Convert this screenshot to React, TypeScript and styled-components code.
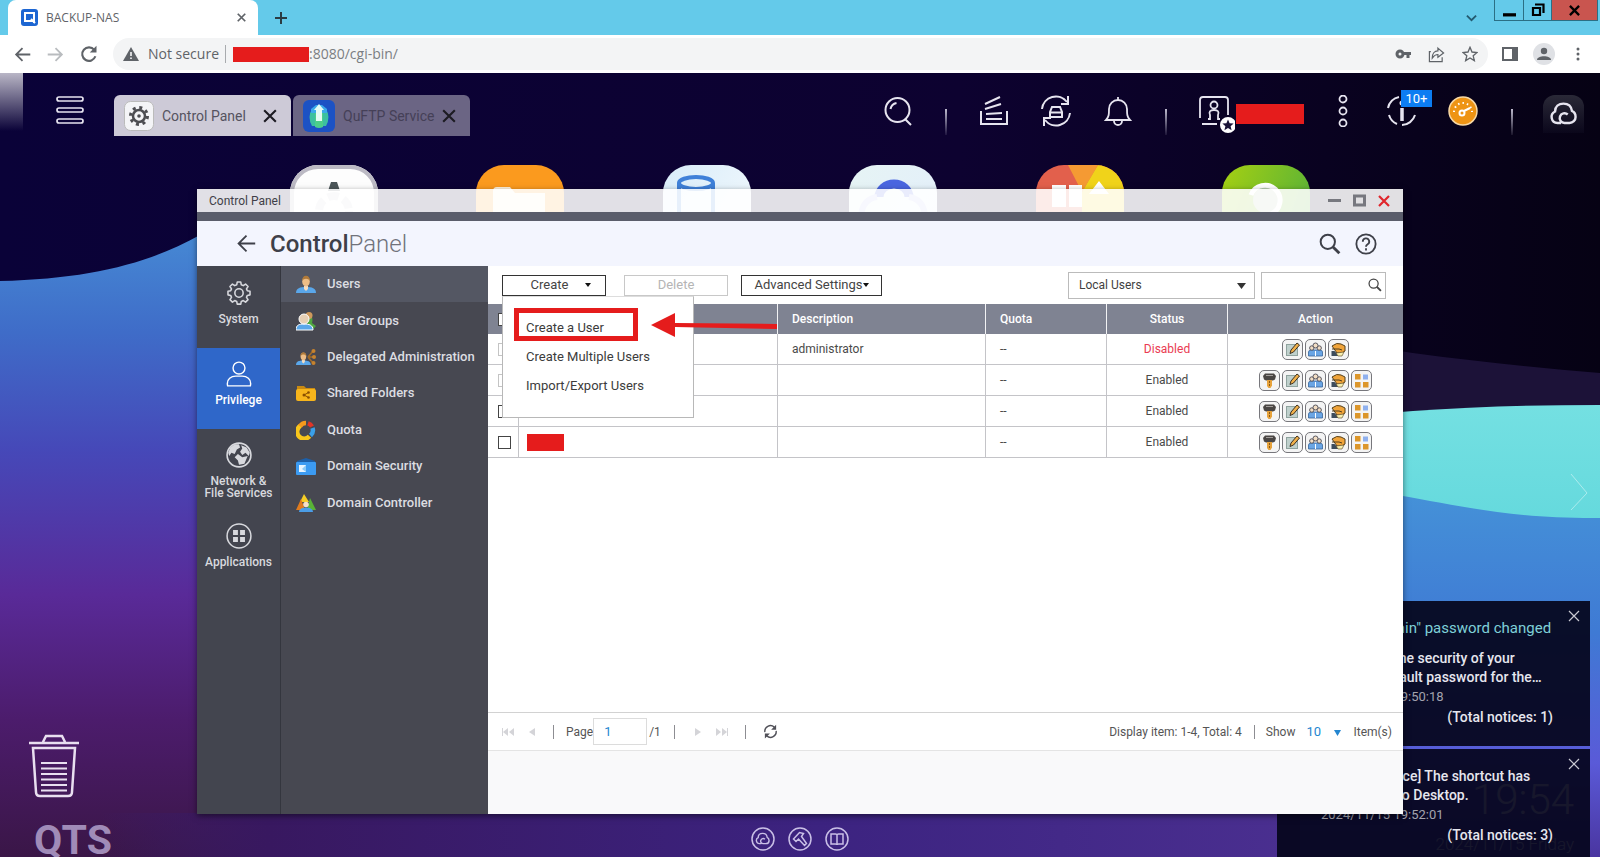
import React from "react";
import styled, { createGlobalStyle, css } from "styled-components";

const RED = "#e51c1c";

const GlobalStyle = createGlobalStyle`
  *, *::before, *::after { box-sizing: border-box; }
  body { margin: 0; overflow: hidden; font-family: Roboto, "Liberation Sans", sans-serif; }
  button, input, select { font-family: inherit; }
  button { background: none; border: 0; padding: 0; color: inherit; cursor: pointer; }
  ul { list-style: none; margin: 0; padding: 0; }
  svg { display: block; flex: none; }
`;

const Screen = styled.div`
  height: 100vh;
  display: flex;
  flex-direction: column;
  overflow: hidden;
`;

/* ---------- browser chrome ---------- */

const BrowserFrame = styled.header`
  font-family: "Open Sans", "Noto Sans", sans-serif;
  background: #64caea;
  color: #5f6368;
`;

const TabStrip = styled.div`
  height: 35px;
  display: flex;
  padding-left: 8px;
`;

const BrowserTab = styled.div`
  width: 250px;
  background: #fff;
  border-radius: 8px 8px 0 0;
  display: flex;
  align-items: center;
  gap: 8px;
  padding: 0 12px 0 13px;
  font-size: 12px;
  line-height: 16px;
`;

const TabTitle = styled.span`
  flex: 1;
`;

const NewTab = styled.button`
  width: 46px;
  display: grid;
  place-items: center;
`;

const StripSpace = styled.div`
  flex: 1;
`;

const TabSearch = styled.button`
  width: 46px;
  display: grid;
  place-items: center;
`;

const FrameButtons = styled.div`
  display: flex;
  height: 21px;
  margin-right: 2px;
  border: 1px solid #2b6f85;
  border-top: 0;
`;

const FrameButton = styled.button<{ $close?: boolean }>`
  width: ${(p) => (p.$close ? 46 : 28)}px;
  display: grid;
  place-items: center;
  color: #000;
  background: ${(p) => (p.$close ? "#c9554f" : "transparent")};
  & + & { border-left: 1px solid #2b6f85; }
`;

const NavBar = styled.div`
  height: 38px;
  background: #fff;
  display: flex;
  align-items: center;
  padding: 0 14px;
`;

const NavButton = styled.button<{ $faded?: boolean }>`
  width: 33px;
  height: 32px;
  display: flex;
  align-items: center;
  color: ${(p) => (p.$faded ? "#b9bcbf" : "#5f6368")};
`;

const AddressBar = styled.div`
  flex: 1;
  height: 32px;
  border-radius: 16px;
  background: #f3f4f5;
  display: flex;
  align-items: center;
  padding: 0 10px;
  font-size: 14px;
  line-height: 20px;
`;

const NotSecure = styled.span`
  display: flex;
  align-items: center;
  gap: 9px;
  padding-right: 6px;
  border-right: 1px solid #a8abae;
  height: 18px;
`;

const Redaction = styled.span<{ $w: number; $h: number }>`
  display: block;
  flex: none;
  width: ${(p) => p.$w}px;
  height: ${(p) => p.$h}px;
  background: ${RED};
`;

const AddressText = styled.span`
  flex: 1;
  color: #7b7e82;
`;

const AddressHost = styled.span`
  padding-left: 7px;
`;

const AddressTools = styled.div`
  display: flex;
  align-items: center;
  gap: 17px;
`;

const BrowserTools = styled.div`
  display: flex;
  align-items: center;
  gap: 15px;
  padding-left: 14px;
`;

const ProfileBadge = styled.button`
  width: 22px;
  height: 22px;
  border-radius: 50%;
  background: #dfe1e5;
  display: grid;
  place-items: center;
`;

/* ---------- desktop ---------- */

const Desktop = styled.main`
  position: relative;
  flex: 1;
  min-height: 0;
  overflow: hidden;
  background: #0a0231;
`;

const Wallpaper = styled.svg`
  position: absolute;
  inset: 0;
  width: 100%;
  height: 100%;
`;

const EdgeGlow = styled.div`
  position: absolute;
  left: 0;
  top: 0;
  width: 23px;
  height: 58px;
  background: linear-gradient(#b9b6c6, rgba(10, 2, 49, 0));
`;

const TopBar = styled.div`
  position: relative;
  height: 92px;
  display: flex;
  align-items: flex-start;
  padding: 22px 3px 0 56px;
  color: #e6e4ef;
`;

const MenuButton = styled.button`
  width: 58px;
  height: 30px;
`;

const AppTabs = styled.div`
  display: flex;
  gap: 2px;
  flex: 1;
`;

const AppTab = styled.div<{ $active?: boolean }>`
  width: 177px;
  height: 41px;
  border-radius: 6px 6px 0 0;
  background: ${(p) => (p.$active ? "#cdcad7" : "#6b6584")};
  color: ${(p) => (p.$active ? "#55535f" : "#454057")};
  display: flex;
  align-items: center;
  gap: 8px;
  padding: 0 14px 0 10px;
  font-size: 14px;
  line-height: 20px;
  & > span { flex: 1; white-space: nowrap; }
`;

const AppTabClose = styled.button`
  color: #1c1b22;
`;

const Tool = styled.button<{ $w?: number }>`
  position: relative;
  width: ${(p) => p.$w ?? 62}px;
  height: 32px;
  display: grid;
  place-items: center;
`;

const ToolSep = styled.span`
  width: 34px;
  height: 40px;
  display: flex;
  align-items: flex-end;
  justify-content: center;
  &::after {
    content: "";
    width: 2px;
    height: 26px;
    background: linear-gradient(#bdbacd, rgba(189, 186, 205, 0.1));
  }
`;

const UserTool = styled.button`
  width: 130px;
  height: 38px;
  display: flex;
  align-items: center;
  gap: 1px;
  padding-left: 15px;
`;

const CountBadge = styled.span`
  position: absolute;
  top: -5px;
  left: 28px;
  width: 31px;
  height: 17px;
  background: #0c7df2;
  color: #fff;
  font-size: 13px;
  line-height: 17px;
`;

const CloudBox = styled.span`
  width: 41px;
  height: 38px;
  border-radius: 12px 12px 0 0;
  background: linear-gradient(#2a2937, rgba(20, 18, 40, 0.3));
  display: grid;
  place-items: center;
`;

const ShortcutRow = styled.div`
  position: relative;
  display: flex;
  justify-content: space-between;
  padding: 0 290px;
`;

const Shortcut = styled.button<{ $bg: string; $ring?: string }>`
  width: 88px;
  height: 88px;
  border-radius: 28px;
  background: ${(p) => p.$bg};
  overflow: hidden;
  ${(p) => p.$ring && css`box-shadow: inset 0 0 0 4px ${p.$ring};`}
`;

const Trash = styled.button`
  position: absolute;
  left: 28px;
  bottom: 58px;
`;

const Brand = styled.div`
  position: absolute;
  left: 34px;
  bottom: -7px;
  font-size: 41px;
  line-height: 48px;
  font-weight: 700;
  color: #a08bb8;
`;

const Dock = styled.div`
  position: absolute;
  left: 0;
  right: 0;
  bottom: 6px;
  display: flex;
  justify-content: center;
  gap: 13px;
  color: #c9bfe6;
`;

const PageNext = styled.button`
  position: absolute;
  right: 11px;
  top: 400px;
  color: rgba(255, 255, 255, 0.45);
`;

const Clock = styled.div`
  position: absolute;
  right: 26px;
  bottom: 2px;
  text-align: right;
  color: #fff;
  font-weight: 300;
  font-size: 17px;
  line-height: 22px;
`;

const ClockTime = styled.div`
  font-size: 42px;
  line-height: 66px;
`;

const Notices = styled.div`
  position: absolute;
  right: 10px;
  bottom: -37px;
  width: 313px;
  display: flex;
  flex-direction: column;
  gap: 3px;
`;

const Notice = styled.article`
  position: relative;
  height: 145px;
  background: rgba(5, 5, 28, 0.93);
  color: #e6e6ee;
  padding: 18px 37px 0 44px;
  font-size: 14px;
  line-height: 19px;
  font-weight: 500;
  white-space: nowrap;
`;

const NoticeTitle = styled.h3`
  margin: 0 0 11px;
  font-size: 15px;
  line-height: 19px;
  font-weight: 400;
  color: #7fd0d8;
`;

const NoticeTime = styled.div`
  color: #a3a3ae;
  font-size: 13px;
  font-weight: 400;
  line-height: 20px;
`;

const NoticeTotal = styled.div`
  text-align: right;
  line-height: 21px;
`;

const NoticeClose = styled.button`
  position: absolute;
  right: 10px;
  top: 9px;
  color: #c9c9d2;
`;

/* ---------- control panel window ---------- */

const Win = styled.section`
  position: absolute;
  left: 197px;
  right: 197px;
  top: 116px;
  bottom: 43px;
  display: flex;
  flex-direction: column;
  box-shadow: 0 2px 6px rgba(0, 0, 0, 0.5);
`;

const WinTitle = styled.div`
  height: 23px;
  background: rgba(255, 255, 255, 0.88);
  display: flex;
  align-items: center;
  padding: 0 13px 0 12px;
  font-size: 12px;
  line-height: 16px;
  color: #3f3f48;
  & > span { flex: 1; }
`;

const WinButtons = styled.div`
  display: flex;
  gap: 12px;
`;

const WinStrip = styled.div`
  height: 9px;
  background: #5a5d6b;
`;

const WinHeader = styled.div`
  height: 45px;
  background: #f3f5fe;
  display: flex;
  align-items: center;
  padding: 0 26px 0 40px;
  color: #3e4049;
`;

const WinHeading = styled.h1`
  flex: 1;
  margin: 0 0 0 14px;
  font-size: 24px;
  line-height: 32px;
  font-weight: 500;
  & > span { font-weight: 300; color: #70727b; }
`;

const HeaderTools = styled.div`
  display: flex;
  gap: 14px;
`;

const WinBody = styled.div`
  flex: 1;
  min-height: 0;
  display: flex;
  background: #fff;
`;

const Sections = styled.nav`
  width: 84px;
  padding-top: 1px;
  background: #43454f;
  border-right: 1px solid #34363e;
`;

const Section = styled.a<{ $active?: boolean }>`
  height: 81px;
  padding-top: 13px;
  display: flex;
  flex-direction: column;
  align-items: center;
  gap: 7px;
  text-decoration: none;
  text-align: center;
  font-size: 12px;
  line-height: 12px;
  font-weight: 500;
  color: ${(p) => (p.$active ? "#fff" : "#d8d9de")};
  background: ${(p) => (p.$active ? "#2f67c9" : "transparent")};
`;

const Pages = styled.nav`
  width: 207px;
  background: #474851;
`;

const PageList = styled.ul`
  height: 255px;
  display: grid;
  grid-auto-rows: 1fr;
`;

const PageLink = styled.a<{ $active?: boolean }>`
  height: 100%;
  display: flex;
  align-items: center;
  gap: 11px;
  padding-left: 15px;
  font-size: 13px;
  line-height: 18px;
  font-weight: 500;
  text-decoration: none;
  color: #dcdde1;
  background: ${(p) => (p.$active ? "#545763" : "transparent")};
`;

const Content = styled.div`
  flex: 1;
  min-width: 0;
  display: flex;
  flex-direction: column;
`;

const Actions = styled.div`
  height: 38px;
  display: flex;
  align-items: center;
  padding: 0 17px 0 14px;
`;

const MenuAnchor = styled.div`
  position: relative;
`;

const ActionButton = styled.button<{ $w: number }>`
  width: ${(p) => p.$w}px;
  height: 21px;
  border: 1px solid #333;
  background: #fff;
  display: flex;
  align-items: center;
  justify-content: center;
  font-size: 13px;
  line-height: 18px;
  color: #444;
  white-space: nowrap;
  &:disabled { border-color: #c8c8c8; color: #b5b5b5; }
`;

const CreateButton = styled(ActionButton)`
  gap: 17px;
  padding-left: 14px;
`;

const DeleteButton = styled(ActionButton)`
  margin: 0 13px 0 18px;
`;

const Spacer = styled.div`
  flex: 1;
`;

const CreateMenu = styled.ul`
  position: absolute;
  z-index: 2;
  left: 0;
  top: 21px;
  width: 192px;
  height: 122px;
  padding-top: 17px;
  background: #fff;
  border: 1px solid #b8b8b8;
  border-top-color: #ddd;
`;

const CreateMenuItem = styled.button`
  width: 100%;
  height: 29px;
  padding-left: 23px;
  text-align: left;
  font-size: 13px;
  line-height: 18px;
  color: #3c3c3c;
`;

const Callout = styled.svg`
  position: absolute;
  z-index: 3;
  left: 12px;
  top: 33px;
`;

const ScopeBox = styled.div`
  position: relative;
  width: 187px;
  height: 27px;
  margin-right: 6px;
  & > svg { position: absolute; right: 9px; top: 11px; pointer-events: none; }
`;

const ScopeSelect = styled.select`
  appearance: none;
  width: 100%;
  height: 100%;
  border: 1px solid #bbb;
  border-radius: 0;
  background: #fff;
  padding: 0 10px;
  font-size: 12px;
  color: #3f3f3f;
`;

const SearchBox = styled.div`
  position: relative;
  width: 125px;
  height: 27px;
  color: #444;
  & > svg { position: absolute; right: 4px; top: 6px; }
`;

const SearchInput = styled.input`
  width: 100%;
  height: 100%;
  border: 1px solid #bbb;
  padding: 0 24px 0 8px;
  font-size: 12px;
`;

const UserTable = styled.table`
  width: 100%;
  table-layout: fixed;
  border-collapse: separate;
  border-spacing: 0;
  font-size: 12px;
  line-height: 16px;
  color: #4a4a4a;
`;

const Col = styled.col<{ $w?: number }>`
  ${(p) => p.$w && css`width: ${p.$w}px;`}
`;

const Th = styled.th<{ $center?: boolean }>`
  height: 30px;
  padding: 0 14px;
  background: #7f8392;
  color: #fff;
  font-weight: 500;
  text-align: ${(p) => (p.$center ? "center" : "left")};
  border-right: 1px solid #f2f2f4;
  &:first-child { border-right-color: #7f8392; padding: 0 0 0 10px; }
  &:last-child { border-right: 0; }
`;

const Td = styled.td<{ $center?: boolean; $off?: boolean }>`
  height: 31px;
  padding: 0 14px;
  text-align: ${(p) => (p.$center ? "center" : "left")};
  color: ${(p) => (p.$off ? "#ea3b52" : "inherit")};
  border-right: 1px solid #c4c4c8;
  border-bottom: 1px solid #c4c4c8;
  &:first-child { padding: 0 0 0 10px; }
  &:nth-child(2) { padding-left: 8px; }
  &:last-child { border-right: 0; padding: 0; }
`;

const Check = styled.input`
  appearance: none;
  display: block;
  width: 13px;
  height: 13px;
  margin: 0;
  border: 1px solid #444;
  background: #fff;
  &:disabled { border-color: #c4c4c4; }
`;

const RowActions = styled.div`
  display: flex;
  justify-content: center;
  gap: 2px;
`;

const RowAction = styled.button`
  width: 21px;
  height: 21px;
  border: 1px solid #77777c;
  border-radius: 5px;
  background: #f4f4f4;
  display: grid;
  place-items: center;
`;

const TableSpace = styled.div`
  flex: 1;
`;

const Pager = styled.div`
  height: 39px;
  border-top: 1px solid #d2d2d2;
  border-bottom: 1px solid #e4e4e4;
  display: flex;
  align-items: center;
  padding: 0 11px 0 8px;
  font-size: 12px;
  line-height: 16px;
  color: #555;
  white-space: nowrap;
`;

const PagerButton = styled.button`
  width: 24px;
  height: 20px;
  display: grid;
  place-items: center;
  color: #505058;
  &:disabled { color: #d4d4d8; }
`;

const PagerSep = styled.span<{ $l: number; $r: number }>`
  width: 1px;
  height: 14px;
  background: #8d8d92;
  margin-left: ${(p) => p.$l}px;
  margin-right: ${(p) => p.$r}px;
`;

const PageInput = styled.input`
  width: 54px;
  height: 27px;
  margin: 0 2px 0 0;
  padding: 0 10px;
  border: 1px solid #dcdcdc;
  font-size: 13px;
  color: #2586d0;
`;

const CountBox = styled.span`
  position: relative;
  width: 58px;
  & > svg { position: absolute; right: 12px; top: 6px; pointer-events: none; }
`;

const CountSelect = styled.select`
  appearance: none;
  border: 0;
  background: none;
  width: 100%;
  padding: 0 11px;
  font-size: 13px;
  color: #2586d0;
`;

const Footer = styled.div`
  height: 63px;
  background: #f9f9fa;
`;

/* ---------- icons ---------- */

type IconProps = { size?: number; w?: number; children: React.ReactNode; box?: string };
const Line = ({ size = 16, w = 2, box = "0 0 24 24", children }: IconProps) => (
  <svg width={size} height={size} viewBox={box} fill="none" stroke="currentColor" strokeWidth={w} aria-hidden="true">
    {children}
  </svg>
);

const Cross = ({ size = 12, w = 2 }: { size?: number; w?: number }) => (
  <Line size={size} w={w} box="0 0 12 12"><path d="M1 1l10 10M11 1L1 11" /></Line>
);

const Caret = ({ color = "#333", size = 9 }: { color?: string; size?: number }) => (
  <svg width={size} height="6" viewBox="0 0 9 6" preserveAspectRatio="none" aria-hidden="true"><path d="M0 0h9L4.500 6z" fill={color} /></svg>
);

const SmallCaret = () => (
  <svg width="6" height="4" viewBox="0 0 6 4" aria-hidden="true"><path d="M0 0h6L3 4z" fill="#111" /></svg>
);

const Magnifier = ({ size, w }: { size: number; w: number }) => (
  <Line size={size} w={w} box="0 0 20 20"><circle cx="8" cy="8" r="6.500" /><path d="M12.500 12.500L18.500 18.500" strokeWidth={w + 0.800} /></Line>
);

const swirl = "M10 19H7a5 5 0 0 1-2-9.500C5 5.500 8 3 12 3c4 0 6.500 2.500 7 6 2 1 3 3 3 5a5 5 0 0 1-5 5h-4a4 4 0 1 1 2.500-7";
const CloudSwirl = ({ size }: { size: number }) => (
  <Line size={size} w={2}><path d={swirl} /></Line>
);

const gearPath = "M10.300 2h3.400l.5 2.600 1.900.8 2.200-1.500 2.400 2.400-1.500 2.200.8 1.900 2.600.5v3.400l-2.600.5-.8 1.900 1.500 2.200-2.400 2.400-2.200-1.500-1.900.8-.5 2.600h-3.400l-.5-2.600-1.900-.8-2.200 1.500-2.400-2.400 1.500-2.200-.8-1.900L1.400 14.300v-3.400l2.600-.5.8-1.900-1.500-2.200 2.400-2.400 2.200 1.500 1.900-.8z";
const Gear = ({ size, w = 1.400 }: { size: number; w?: number }) => (
  <Line size={size} w={w} box="-.5 0 25 25"><path d={gearPath} strokeLinejoin="round" /><circle cx="12" cy="12.500" r="4" /></Line>
);

const Person = () => (
  <g>
    <path d="M0 19c0-5 4-6 10-6s10 1 10 6z" fill="#5aa7ea" />
    <path d="M8 12h4v3l-2 2-2-2z" fill="#f4dcc0" />
    <ellipse cx="10" cy="7.500" rx="3.800" ry="5" fill="#edbd86" />
    <path d="M6 7c0-7 8-7 8 0-2-3-6-3-8 0z" fill="#b07a3a" />
  </g>
);

const PageIcon = ({ kind }: { kind: string }) => (
  <svg width="20" height="20" viewBox="0 0 20 20" aria-hidden="true">
    {kind === "user" && <Person />}
    {kind === "group" && (
      <>
        <path d="M11 4c6-2 6 6 5 8l4 3-3 3h-6z" fill="#4fa640" />
        <circle cx="13" cy="4.500" r="3.500" fill="#cf9a5c" />
        <path d="M0 19c0-5 3-6 8-6s9 1 9 6z" fill="#5aa7ea" stroke="#fff" />
        <circle cx="8" cy="8" r="5" fill="#e6cfb4" stroke="#fff" />
      </>
    )}
    {kind === "delegate" && (
      <>
        <g transform="translate(0 4) scale(.74)"><Person /></g>
        <path d="M12 10l5-6M12 10h6M12 10l5 6" stroke="#a06a28" strokeWidth="1.600" />
        <g fill="#c5822e"><circle cx="17.500" cy="4" r="2" /><circle cx="18" cy="10" r="2" /><circle cx="17.500" cy="16" r="2" /></g>
      </>
    )}
    {kind === "folder" && (
      <>
        <path d="M1 3h7l2 2h9v5H1z" fill="#c98a12" />
        <rect x="0" y="6" width="20" height="12" rx="2" fill="#f7b51c" />
        <path d="M12.500 9.500L8 12l4.500 2.500" stroke="#8a4f00" fill="none" /><circle cx="8" cy="12" r="1.500" fill="#8a4f00" /><circle cx="12.500" cy="9.500" r="1.300" fill="#8a4f00" /><circle cx="12.500" cy="14.500" r="1.300" fill="#8a4f00" />
      </>
    )}
    {kind === "quota" && (
      <g fill="none" strokeWidth="4.500">
        <path d="M13.500 16.200A7 7 0 1 1 4.500 5.700" stroke="#f8c61c" />
        <path d="M4 6.300A7 7 0 0 1 10 3" stroke="#f59a1c" />
        <path d="M12 3.300a7 7 0 0 1 4 3.200" stroke="#e03528" />
        <path d="M16.500 8A7 7 0 0 1 14.500 15.500" stroke="#3aa0e8" />
      </g>
    )}
    {kind === "security" && (
      <>
        <path d="M1 5l9-3 9 3v4H1z" fill="#1d5fa8" />
        <rect x="0" y="6" width="20" height="13" rx="1" fill="#3c9bf2" />
        <rect x="3" y="9" width="7" height="7" fill="#e8f5ff" /><path d="M10 9v7l-4-3z" fill="#8ccaf8" />
      </>
    )}
    {kind === "controller" && (
      <>
        <path d="M8 1l5 8H4z" fill="#f6cd25" /><path d="M5 6l4 11H0z" fill="#e07b1e" /><path d="M14 5l6 12h-9z" fill="#59b436" />
        <path d="M3 19c0-6 14-6 14 0z" fill="#4b9de6" /><circle cx="10" cy="11.500" r="2.800" fill="#f6e0c6" />
      </>
    )}
  </svg>
);

const RowIcon = ({ kind }: { kind: string }) => (
  <svg width="15" height="15" viewBox="0 0 15 15" aria-hidden="true">
    {kind === "password" && (
      <>
        <path d="M3 .5h9l2 2.500-1 3.500-2 1H4l-2-1L1 3z" fill="#4a4644" /><path d="M4 2.500h7" stroke="#a19c99" />
        <path d="M5 7h5v5.500L8.500 15h-2L5 13z" fill="#e8a33c" /><path d="M7.500 8v6" stroke="#8a5a14" strokeDasharray="2 1" />
      </>
    )}
    {kind === "edit" && (
      <>
        <rect x="1.500" y="2.500" width="11" height="11" fill="#bfd0cc" stroke="#8fa39e" />
        <path d="M5 11.500l1-3.500 6-7 2.500 2-6 7z" fill="#f0b04a" stroke="#3d3020" />
      </>
    )}
    {kind === "groups" && (
      <>
        <path d="M.5 14v-4q0-2 3-2h8q3 0 3 2v4z" fill="#6aa5e4" stroke="#356399" strokeWidth=".8" />
        <g fill="#f2ddc3" stroke="#4a4a55" strokeWidth=".9"><circle cx="3.800" cy="6" r="2.200" /><circle cx="11.200" cy="6" r="2.200" /><circle cx="7.500" cy="3.500" r="2.500" /></g>
        <path d="M7.500 9v5" stroke="#fff" />
      </>
    )}
    {kind === "folders" && (
      <>
        <path d="M1 4q5-4 9-2l4 2v5l-3 2H6z" fill="#f0a43a" stroke="#55401c" />
        <path d="M1 7h7l3 1" stroke="#55401c" fill="none" /><path d="M.5 9h3l5 5h-8z" fill="#3d4c5c" /><path d="M5 11l8-1-2 4H7z" fill="#f7efb0" stroke="#55401c" strokeWidth=".6" />
      </>
    )}
    {kind === "apps" && (
      <>
        <path d="M1 1h5.500v5.500H1zM1 9h5.500v5.500H1zM9 9h5.500v5.500H9z" fill="#dc962a" /><path d="M9 1.500h5v5H9z" fill="#8fb0ee" />
      </>
    )}
  </svg>
);

const ringed = (children: React.ReactNode) => (
  <Line size={24} w={1.500}><circle cx="12" cy="12" r="11" />{children}</Line>
);

/* ---------- data ---------- */

const sections = [
  { label: <>System</>, icon: <Gear size={26} w={1.500} /> },
  { label: <>Privilege</>, active: true, icon: <Line size={26} w={1.300}><circle cx="12" cy="6.500" r="5.500" /><path d="M1.500 23c-1.500-7 4-9 7.500-9h6c3.500 0 9 2 7.500 9z" /></Line> },
  { label: <>Network &amp;<br />File Services</>, icon: (
    <Line size={26} w={1.500}><circle cx="12" cy="12" r="11" /><path d="M4 5l4-3h4l1 3-3 2-2 4-3-1-2 3-1-3zM14 3l5 2 3 5-1 3-3-3-3 2-2-3 2-3zM11 11l4 3 5-1-3 7-5 1-1-4-3-3z" fill="currentColor" stroke="none" /></Line>
  ) },
  { label: <>Applications</>, icon: (
    <Line size={26} w={1.400}><circle cx="12" cy="12" r="11" /><path d="M6.500 6.500h4.500V11H6.500zM13 6.500h4.500V11H13zM6.500 13h4.500v4.500H6.500zM13 13h4.500v4.500H13z" fill="currentColor" stroke="none" /></Line>
  ) },
];

const pages = [
  ["Users", "user"], ["User Groups", "group"], ["Delegated Administration", "delegate"], ["Shared Folders", "folder"],
  ["Quota", "quota"], ["Domain Security", "security"], ["Domain Controller", "controller"],
];

const allActions = ["password", "edit", "groups", "folders", "apps"];
const users = [
  { description: "administrator", enabled: false, locked: true, actions: allActions.slice(1, 4) },
  { description: "", enabled: true, locked: true, actions: allActions },
  { description: "", enabled: true, actions: allActions },
  { description: "", enabled: true, actions: allActions },
];

const shortcuts = [
  { name: "Control Panel", bg: "#fdfdfd", ring: "#bcbac4", art: (
    <><path d="M38 26l3-9h6l3 9z" fill="#4b5558" /><circle cx="44" cy="46" r="15" fill="none" stroke="#d5d6da" strokeWidth="8" strokeDasharray="11 5" /></>
  ) },
  { name: "File Station", bg: "#fb9a1e", art: <path d="M17 70V26q0-4 4-4h13l5 6h30v42z" fill="#fff3dd" /> },
  { name: "Storage & Snapshots", bg: "linear-gradient(120deg,#d8ecf9,#f3f9fd)", art: (
    <g fill="none" stroke="#3f80d8" strokeWidth="4"><ellipse cx="33" cy="18" rx="17" ry="6" /><path d="M16 18v30M50 18v30" /></g>
  ) },
  { name: "myQNAPcloud", bg: "linear-gradient(120deg,#e6f4f4,#e3eefb)", art: <><path d="M30 32a15 13 0 0 1 30 0" fill="none" stroke="#4a66e0" strokeWidth="9" /><path d="M28 32q-14 2-16 18M60 32q14 2 16 18" fill="none" stroke="#b9c4f4" strokeWidth="6" /></> },
  { name: "App Center", bg: "#e2604c", art: (
    <><path d="M32 0h30L46 27z" fill="#f59a33" /><path d="M62 0h26v88H46V27z" fill="#f0d31a" /><path d="M16 20h14v22H16zM33 20h13v22H33zM53 29l10-13 10 13z" fill="#fff" /></>
  ) },
  { name: "Help Center", bg: "linear-gradient(110deg,#a6d012,#4fae3c)", art: <><circle cx="44" cy="35" r="13" fill="#b9cdb0" /><path d="M29 30a15 15 0 1 1 20 19" fill="none" stroke="#fff" strokeWidth="5" /></> },
];

/* ---------- page parts ---------- */

const Browser = () => (
  <BrowserFrame>
    <TabStrip>
      <BrowserTab>
        <svg width="17" height="17" viewBox="0 0 17 17" aria-hidden="true"><rect width="17" height="17" rx="3" fill="#1d66d2" /><path d="M12 12H4V4h9v10M10 10l4 4" stroke="#fff" strokeWidth="2" fill="none" /></svg>
        <TabTitle>BACKUP-NAS</TabTitle>
        <button aria-label="Close tab"><Cross size={9} w={2.300} /></button>
      </BrowserTab>
      <NewTab aria-label="New tab"><Line size={12} w={2} box="0 0 12 12"><path d="M6 0v12M0 6h12" stroke="#2b3c43" /></Line></NewTab>
      <StripSpace />
      <TabSearch aria-label="Search tabs"><Line size={11} w={2} box="0 0 12 12"><path d="M1 4l5 5 5-5" stroke="#235a70" /></Line></TabSearch>
      <FrameButtons>
        <FrameButton aria-label="Minimize"><Line size={13} w={3} box="0 0 12 12"><path d="M0 10h12" /></Line></FrameButton>
        <FrameButton aria-label="Restore"><Line size={14} w={2.200} box="0 0 14 14"><path d="M2 5h7v7H2zM4 1.500h8.500V10" /></Line></FrameButton>
        <FrameButton $close aria-label="Close"><Line size={11} w={2.500} box="0 0 12 12"><path d="M1 1l10 10M11 1L1 11" /></Line></FrameButton>
      </FrameButtons>
    </TabStrip>
    <NavBar>
      <NavButton aria-label="Back"><Line size={17} w={2.500}><path d="M23 12H3M12 3l-9 9 9 9" /></Line></NavButton>
      <NavButton $faded aria-label="Forward"><Line size={17} w={2.500}><path d="M1 12h20M12 3l9 9-9 9" /></Line></NavButton>
      <NavButton aria-label="Reload"><Line size={18} w={2.800}><path d="M20.500 15A9 9 0 1 1 19 6.500" /><path d="M22 1v9h-9z" fill="currentColor" stroke="none" /></Line></NavButton>
      <AddressBar>
        <NotSecure>
          <svg width="16" height="14" viewBox="0 0 16 14" aria-hidden="true"><path d="M8 0l8 14H0z" fill="#5f6368" /><path d="M8 5v4M8 10.500v1.500" stroke="#fff" strokeWidth="1.500" /></svg>
          Not secure
        </NotSecure>
        <AddressHost><Redaction $w={76} $h={15} /></AddressHost>
        <AddressText>:8080/cgi-bin/</AddressText>
        <AddressTools>
          <button aria-label="Passwords"><svg width="16" height="10" viewBox="0 0 16 10" fill="none" stroke="#5f6368" aria-hidden="true"><circle cx="5" cy="5" r="3" strokeWidth="3" /><path d="M8 4.500h8M13 5v4" strokeWidth="3" /></svg></button>
          <button aria-label="Share"><Line size={17} w={1.700}><path d="M4 8H2v14h18v-6" /><path d="M14 3l8 7-8 6v-4c-4 0-6 2-8 5 0-6 3-10 8-10z" /></Line></button>
          <button aria-label="Bookmark"><Line size={16} w={2}><path d="M12 2l3 7 7.500.7-5.700 5 1.700 7.300L12 18l-6.500 4 1.700-7.300-5.700-5L9 9z" /></Line></button>
        </AddressTools>
      </AddressBar>
      <BrowserTools>
        <button aria-label="Side panel"><Line size={16} w={2} box="0 0 16 16"><path d="M1 2h14v12H1z" /><path d="M11 2h4v12h-4z" fill="currentColor" /></Line></button>
        <ProfileBadge aria-label="Profile"><svg width="14" height="14" viewBox="0 0 14 14" fill="#5f6368" aria-hidden="true"><circle cx="7" cy="4" r="3.200" /><path d="M0 13c0-5 14-5 14 0z" /></svg></ProfileBadge>
        <button aria-label="Menu"><svg width="16" height="16" viewBox="0 0 16 16" fill="#5f6368" aria-hidden="true"><circle cx="8" cy="3" r="1.500" /><circle cx="8" cy="8" r="1.500" /><circle cx="8" cy="13" r="1.500" /></svg></button>
      </BrowserTools>
    </NavBar>
  </BrowserFrame>
);

const Background = () => (
  <Wallpaper viewBox="0 0 1600 784" preserveAspectRatio="none" aria-hidden="true">
    <defs>
      <linearGradient id="left" x1="0" y1="0" x2="0" y2="1">
        <stop offset="0" stopColor="#4689d4" /><stop offset=".16" stopColor="#3f6cc8" /><stop offset=".35" stopColor="#4648b8" />
        <stop offset=".58" stopColor="#592a98" /><stop offset=".78" stopColor="#4c1c6c" /><stop offset="1" stopColor="#3a1647" />
      </linearGradient>
      <linearGradient id="floor" x1="0" y1="0" x2="1" y2="0">
        <stop offset="0" stopColor="#381d6a" stopOpacity="0" /><stop offset=".14" stopColor="#381860" /><stop offset=".6" stopColor="#3c2380" /><stop offset="1" stopColor="#4a2f90" />
      </linearGradient>
      <linearGradient id="right" x1="0" y1="0" x2="0" y2="1">
        <stop offset="0" stopColor="#4593d8" /><stop offset=".4" stopColor="#3f7ad4" /><stop offset=".75" stopColor="#5a5ad8" /><stop offset="1" stopColor="#4a35a0" />
      </linearGradient>
      <linearGradient id="teal" x1="0" y1="0" x2="0" y2="1"><stop offset="0" stopColor="#74e0e2" /><stop offset="1" stopColor="#62d8dc" /></linearGradient>
      <linearGradient id="night" x1="0" y1="0" x2="1" y2="0"><stop offset="0" stopColor="#0a0238" /><stop offset=".6" stopColor="#0d0230" /><stop offset="1" stopColor="#060214" /></linearGradient>
    </defs>
    <rect width="1600" height="784" fill="url(#night)" />
    <path d="M0 208C90 206 150 190 200 162L230 160V700H1400V784H0z" fill="url(#left)" />
    <rect x="100" y="740" width="1200" height="44" fill="url(#floor)" />
    <path d="M1300 262C1400 280 1500 292 1600 300V400H1300z" fill="#1c1238" />
    <path d="M1300 350C1400 336 1500 332 1600 332V470H1300z" fill="url(#teal)" />
    <path d="M1300 410C1420 418 1470 446 1600 445V784H1300z" fill="url(#right)" />
  </Wallpaper>
);

const DesktopBar = () => (
  <TopBar>
    <MenuButton aria-label="Main menu">
      <Line size={28} w={1.700} box="0 0 28 28"><rect x="1" y="1" width="26" height="4" rx="2" /><rect x="1" y="12" width="26" height="4" rx="2" /><rect x="1" y="23" width="26" height="4" rx="2" /></Line>
    </MenuButton>
    <AppTabs>
      <AppTab $active>
        <svg width="30" height="30" viewBox="0 0 30 30" fill="none" aria-hidden="true"><rect x=".5" y=".5" width="29" height="29" rx="6" fill="#f4f4f7" stroke="#bbb" /><circle cx="15" cy="15" r="6" stroke="#4d4d52" strokeWidth="2.500" /><circle cx="15" cy="15" r="8.500" stroke="#4d4d52" strokeWidth="3" strokeDasharray="3 3.680" /><circle cx="15" cy="15" r="1.800" fill="#4d4d52" /></svg>
        <span>Control Panel</span>
        <AppTabClose aria-label="Close Control Panel"><Cross size={14} w={1.800} /></AppTabClose>
      </AppTab>
      <AppTab>
        <svg width="32" height="32" viewBox="0 0 32 32" aria-hidden="true"><rect width="32" height="32" rx="6" fill="#1c52c4" /><path d="M9 9q-5 8 0 17h3V9zM23 9q5 8 0 17h-3V9z" fill="#3cc0a0" /><path d="M8 9l5-4h6l5 4v4H8z" fill="#3aa9ea" /><path d="M12 13h8v14q-4 2-8 0z" fill="#4ccf8a" /><path d="M16 4l5 6h-2v11h-6V10h-2z" fill="#e4fbf4" /></svg>
        <span>QuFTP Service</span>
        <AppTabClose aria-label="Close QuFTP Service"><Cross size={14} w={1.800} /></AppTabClose>
      </AppTab>
    </AppTabs>
    <Tool aria-label="Search"><Line size={30} w={2} box="0 0 30 30"><circle cx="14.500" cy="14" r="12" /><path d="M7.500 13q1-5 6-6M22 23l6 6" /></Line></Tool>
    <ToolSep />
    <Tool aria-label="Volumes"><Line size={30} w={2} box="0 0 30 30"><path d="M2 15v13h26V15M7 23h16M7 18l16-1M6 13l16-5M6 8l15-7" /></Line></Tool>
    <Tool aria-label="External device"><Line size={32} w={2} box="0 0 32 32"><path d="M2 14A14 14 0 0 1 27 7M28 1v8h-7M30 18A14 14 0 0 1 5 25M4 31v-8h7M10 17l2-5h8l2 5v5H10zM10 17.500h12" /></Line></Tool>
    <Tool aria-label="Notifications"><Line size={30} w={1.800} box="0 0 30 30"><path d="M15 1v3M3 24c3-3 3-6 3-11a9 9 0 0 1 18 0c0 5 0 8 3 11zM11 25a4 4 0 0 0 8 0" /></Line></Tool>
    <ToolSep />
    <UserTool aria-label="Account">
      <svg width="37" height="38" viewBox="0 0 37 38" fill="none" stroke="currentColor" strokeWidth="1.800" aria-hidden="true">
        <path d="M2 23V5q0-3 3-3h22q3 0 3 3v15M4 29h15" /><circle cx="16" cy="10" r="3.500" /><path d="M10 24h2v-4q-2-5 4-5t4 5v4h2" />
        <circle cx="30" cy="30" r="8" fill="#fff" stroke="none" /><path d="M30 24.500l1.600 3.700 4 .3-3 2.700 1 4-3.600-2.200-3.600 2.200 1-4-3-2.700 4-.3z" fill="#1a1438" stroke="none" />
      </svg>
      <Redaction $w={68} $h={20} />
    </UserTool>
    <Tool $w={60} aria-label="More"><Line size={32} w={1.800} box="0 0 32 32"><circle cx="16" cy="4" r="3.500" /><circle cx="16" cy="16" r="3.500" /><circle cx="16" cy="28" r="3.500" /></Line></Tool>
    <Tool $w={58} aria-label="Background tasks">
      <Line size={32} w={2} box="0 0 32 32"><path d="M13 2A14 14 0 0 0 2 13M3 20a14 14 0 0 0 8 9M16 30a14 14 0 0 0 13-10" /><path d="M16 13v13" strokeWidth="3.500" /><circle cx="16" cy="8" r="1.500" /></Line>
      <CountBadge>10+</CountBadge>
    </Tool>
    <Tool $w={64} aria-label="Dashboard">
      <svg width="30" height="30" viewBox="0 0 30 30" fill="none" aria-hidden="true"><circle cx="15" cy="15" r="14" fill="#ee9414" stroke="#f7d9a6" strokeWidth="1.500" /><path d="M6 16a9 9 0 0 1 18 0" stroke="#fff" strokeWidth="2" strokeDasharray="1.500 3" /><circle cx="14" cy="17" r="2.500" stroke="#fff" strokeWidth="2" /><path d="M16 15l6-3" stroke="#fff" strokeWidth="2" /></svg>
    </Tool>
    <ToolSep />
    <Tool $w={68} aria-label="myQNAPcloud"><CloudBox><CloudSwirl size={29} /></CloudBox></Tool>
  </TopBar>
);

const UserToolbar = () => (
  <Actions>
    <MenuAnchor>
      <CreateButton $w={104} aria-haspopup="menu" aria-expanded="true">Create<SmallCaret /></CreateButton>
      <CreateMenu>
        {["Create a User", "Create Multiple Users", "Import/Export Users"].map((item) => (
          <li key={item}><CreateMenuItem>{item}</CreateMenuItem></li>
        ))}
      </CreateMenu>
      <Callout width="264" height="34" viewBox="0 0 264 34" aria-hidden="true">
        <rect x="2.500" y="2.500" width="119" height="28" fill="none" stroke={RED} strokeWidth="5" />
        <path d="M137 17L161 5v10l102 1v5l-102-2v10z" fill={RED} />
      </Callout>
    </MenuAnchor>
    <DeleteButton $w={104} disabled>Delete</DeleteButton>
    <ActionButton $w={141}>Advanced Settings<SmallCaret /></ActionButton>
    <Spacer />
    <ScopeBox>
      <ScopeSelect aria-label="User source"><option>Local Users</option></ScopeSelect>
      <Caret />
    </ScopeBox>
    <SearchBox>
      <SearchInput type="text" aria-label="Search users" />
      <Magnifier size={14} w={1.800} />
    </SearchBox>
  </Actions>
);

const Users = () => (
  <UserTable>
    <colgroup><Col $w={31} /><Col /><Col $w={208} /><Col $w={121} /><Col $w={121} /><Col $w={175} /></colgroup>
    <thead>
      <tr>
        <Th><Check type="checkbox" aria-label="Select all" /></Th>
        <Th aria-label="Username" />
        <Th>Description</Th>
        <Th>Quota</Th>
        <Th $center>Status</Th>
        <Th $center>Action</Th>
      </tr>
    </thead>
    <tbody>
      {users.map((user, i) => (
        <tr key={i}>
          <Td><Check type="checkbox" disabled={user.locked} aria-label={`Select user ${i + 1}`} /></Td>
          <Td>{i === 3 && <Redaction $w={37} $h={17} />}</Td>
          <Td>{user.description}</Td>
          <Td>--</Td>
          <Td $center $off={!user.enabled}>{user.enabled ? "Enabled" : "Disabled"}</Td>
          <Td>
            <RowActions>
              {user.actions.map((kind) => <RowAction key={kind} aria-label={kind}><RowIcon kind={kind} /></RowAction>)}
            </RowActions>
          </Td>
        </tr>
      ))}
    </tbody>
  </UserTable>
);

const arrow = (d: string) => <svg width="12" height="8" viewBox="0 0 12 8" fill="currentColor" aria-hidden="true"><path d={d} /></svg>;

const PageControls = () => (
  <Pager>
    <PagerButton disabled aria-label="First page">{arrow("M0 0h1v8H0zM6 0v8L1 4zM12 0v8L7 4z")}</PagerButton>
    <PagerButton disabled aria-label="Previous page">{arrow("M9 0v8L3 4z")}</PagerButton>
    <PagerSep $l={9} $r={12} />
    <label htmlFor="page">Page</label>
    <PageInput id="page" type="text" defaultValue="1" />
    <span>/1</span>
    <PagerSep $l={13} $r={11} />
    <PagerButton disabled aria-label="Next page">{arrow("M3 0v8l6-4z")}</PagerButton>
    <PagerButton disabled aria-label="Last page">{arrow("M0 0v8l5-4zM6 0v8l5-4zM11 0h1v8h-1z")}</PagerButton>
    <PagerSep $l={11} $r={13} />
    <PagerButton aria-label="Refresh"><Line size={15} w={2.200}><path d="M3 13A9 9 0 0 1 18 5M21 11A9 9 0 0 1 6 19" /><path d="M21 1v8h-8zM3 23v-8h8z" fill="currentColor" stroke="none" /></Line></PagerButton>
    <Spacer />
    <span>Display item: 1-4, Total: 4</span>
    <PagerSep $l={12} $r={11} />
    <label htmlFor="count">Show</label>
    <CountBox>
      <CountSelect id="count"><option>10</option></CountSelect>
      <Caret color="#2586d0" size={7} />
    </CountBox>
    <span>Item(s)</span>
  </Pager>
);

const ControlPanel = () => (
  <Win>
    <WinTitle>
      <span>Control Panel</span>
      <WinButtons>
        <button aria-label="Minimize"><Line size={13} w={3} box="0 0 13 12"><path d="M0 6h13" stroke="#77787f" /></Line></button>
        <button aria-label="Maximize"><Line size={13} w={3} box="0 0 13 12"><path d="M1.500 1.500h10v9h-10z" stroke="#77787f" /></Line></button>
        <button aria-label="Close"><Line size={12} w={2.200} box="0 0 12 12"><path d="M1 1l10 10M11 1L1 11" stroke="#e0262c" /></Line></button>
      </WinButtons>
    </WinTitle>
    <WinStrip />
    <WinHeader>
      <button aria-label="Back"><Line size={19} w={2.300}><path d="M23 12H2M12 2L2 12l10 10" /></Line></button>
      <WinHeading>Control<span>Panel</span></WinHeading>
      <HeaderTools>
        <button aria-label="Search"><Magnifier size={22} w={1.800} /></button>
        <button aria-label="Help"><Line size={22} w={2}><circle cx="12" cy="12" r="10.500" /><path d="M8.500 9.500a3.500 3.500 0 1 1 5 3q-1.500 1-1.500 2.500M12 16.500v2.500" /></Line></button>
      </HeaderTools>
    </WinHeader>
    <WinBody>
      <Sections aria-label="Sections">
        {sections.map((s, i) => <Section key={i} href="#" $active={s.active}>{s.icon}<span>{s.label}</span></Section>)}
      </Sections>
      <Pages aria-label="Privilege">
        <PageList>
          {pages.map(([label, kind], i) => <li key={kind}><PageLink href="#" $active={i === 0}><PageIcon kind={kind} />{label}</PageLink></li>)}
        </PageList>
      </Pages>
      <Content>
        <UserToolbar />
        <Users />
        <TableSpace />
        <PageControls />
        <Footer />
      </Content>
    </WinBody>
  </Win>
);

export default function App() {
  return (
    <Screen>
      <GlobalStyle />
      <Browser />
      <Desktop>
        <Background />
        <EdgeGlow />
        <DesktopBar />
        <ShortcutRow>
          {shortcuts.map((s) => (
            <Shortcut key={s.name} $bg={s.bg} $ring={s.ring} aria-label={s.name}>
              <svg width="88" height="88" viewBox="0 0 88 88" aria-hidden="true">{s.art}</svg>
            </Shortcut>
          ))}
        </ShortcutRow>
        <Trash aria-label="Recycle bin">
          <svg width="52" height="66" viewBox="0 0 52 66" fill="none" stroke="#e9dff0" strokeWidth="2.500" aria-hidden="true">
            <path d="M1 10h50M15 9l3-6h16l3 6M5 15h42l-3 44q0 4-4 4H12q-4 0-4-4z" /><path d="M13 30h26M13 35.500h26M13 41h26M13 46.500h26M13 52h26M13 57.500h26" strokeWidth="2" />
          </svg>
        </Trash>
        <Brand>QTS</Brand>
        <Dock>
          <button aria-label="myQNAPcloud">{ringed(<g transform="translate(4 4.500) scale(.64)"><path d={swirl} strokeWidth="2.200" /></g>)}</button>
          <button aria-label="Utilities">{ringed(<path d="M5.500 12l6-6.500 4 1-2 3 5 7-2 2-6-6.500-2.500 2.500z" />)}</button>
          <button aria-label="Guide">{ringed(<path d="M6 7h4.500q1.500 0 1.500 1 0-1 1.500-1H18v10h-4.500q-1.500 0-1.500 1 0-1-1.500-1H6zM12 8v9" />)}</button>
        </Dock>
        <PageNext aria-label="Next page"><svg width="22" height="38" viewBox="0 0 22 38" fill="none" stroke="currentColor" aria-hidden="true"><path d="M4 1l16 19L4 37" /></svg></PageNext>
        <Clock><ClockTime>19:54</ClockTime>2024/11/15 Friday</Clock>
        <Notices>
          <Notice>
            <NoticeTitle>[Users] "admin" password changed</NoticeTitle>
            To improve the security of your<br />
            NAS, the default password for the…
            <NoticeTime>2024/11/15 19:50:18</NoticeTime>
            <NoticeTotal>(Total notices: 1)</NoticeTotal>
            <NoticeClose aria-label="Dismiss"><Cross w={1.200} /></NoticeClose>
          </Notice>
          <Notice>
            [QuFTP Service] The shortcut has<br />
            been added to Desktop.
            <NoticeTime>2024/11/15 19:52:01</NoticeTime>
            <NoticeTotal>(Total notices: 3)</NoticeTotal>
            <NoticeClose aria-label="Dismiss"><Cross w={1.200} /></NoticeClose>
          </Notice>
        </Notices>
        <ControlPanel />
      </Desktop>
    </Screen>
  );
}
